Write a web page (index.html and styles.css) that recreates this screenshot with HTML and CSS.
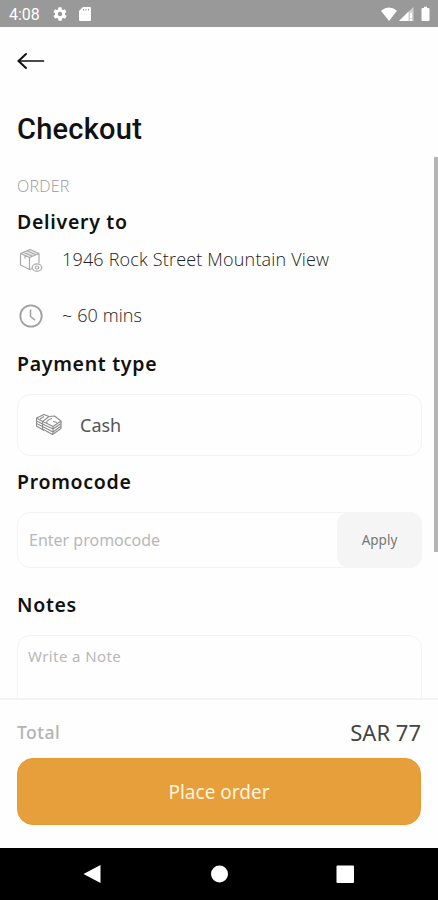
FILE: index.html
```html
<!DOCTYPE html>
<html lang="en">
<head>
<meta charset="utf-8">
<title>Checkout</title>
<link rel="stylesheet" href="styles.css">
</head>
<body>
<div class="phone">
  <header class="status">
    <span class="time">4:08</span>
    <svg class="gear" width="16" height="16" viewBox="0 0 24 24"><path fill="#fff" fill-rule="evenodd" d="M19.400 13a7.500 7.500 0 0 0 0-2l2.100-1.600a.5.5 0 0 0 .1-.6l-2-3.500a.5.5 0 0 0-.6-.2l-2.500 1a7 7 0 0 0-1.700-1l-.4-2.700a.5.5 0 0 0-.5-.4h-4a.5.5 0 0 0-.5.4l-.4 2.700a7 7 0 0 0-1.700 1l-2.500-1a.5.5 0 0 0-.6.2l-2 3.500a.5.5 0 0 0 .1.6L4.600 11a7.500 7.500 0 0 0 0 2l-2.100 1.600a.5.5 0 0 0-.1.6l2 3.500c.1.2.4.3.6.2l2.500-1a7 7 0 0 0 1.700 1l.4 2.700c0 .2.2.4.5.4h4c.2 0 .5-.2.5-.4l.4-2.700a7 7 0 0 0 1.700-1l2.500 1c.2.1.5 0 .6-.2l2-3.500a.5.5 0 0 0-.1-.6zM12 15.300a3.300 3.300 0 1 1 0-6.600 3.300 3.300 0 0 1 0 6.600z"/></svg>
    <svg class="card-icon" width="12" height="14" viewBox="0 0 12 14"><path fill="#fff" fill-rule="evenodd" d="M4 0h7q1 0 1 1v12q0 1-1 1H1q-1 0-1-1V4zM4 2v1.500h1V2zM6.500 2v1.500h1V2zM9 2v1.500h1V2z"/></svg>
    <svg class="signals" width="50" height="16" viewBox="0 0 50 16"><path fill="#fff" d="M0 4.200Q8-2 16 4.200L8 14.500zM40.500 2.500q0-1 1-1h1.500V.3h3v1.200h1.500q1 0 1 1v11q0 1-1 1h-6q-1 0-1-1z" transform="translate(0 .5)"/><path fill="#fff" fill-opacity=".55" d="M18 15 32.500 1v14z"/><path fill="#fff" d="M18 15 27.500 5.500V15zM29 7h2v5h-2zM29 13h2v2h-2z"/></svg>
  </header>
  <main class="content">
    <svg class="back" width="28" height="18" viewBox="0 0 28 18" fill="none" stroke="#111" stroke-linecap="round"><path stroke-width="1.700" d="M2 9h24.500"/><path stroke-width="2" d="M9 2 1.500 9 9 16"/></svg>
    <h1>Checkout</h1>
    <p class="eyebrow">ORDER</p>
    <h2 class="delivery-title"><span>Delivery to</span></h2>
    <div class="info address">
      <svg width="26" height="26" viewBox="0 0 26 26" fill="none" stroke="#aaa" stroke-width="1.200" stroke-linejoin="round"><path d="M3.500 6.500 13 2.500l9 4v9.500M3.500 6.500v11.500l9 4.500 3-1M3.500 6.500l9 4 9.500-4M12.500 10.500v12M6.500 5.200l9 4M9.800 3.800l9 4M8 8.500v3"/><path fill="#aaa" fill-opacity=".25" stroke="none" d="m3.500 6.500 9.500-4 9 4-9.500 4z"/><ellipse cx="20" cy="20.500" rx="4.800" ry="3.700"/><ellipse cx="20" cy="20.500" rx="1.800" ry="1.500"/></svg>
      <span class="addr-text">1946 Rock Street Mountain View</span>
    </div>
    <div class="info eta">
      <svg width="26" height="26" viewBox="0 0 26 26" fill="none" stroke="#a0a0a0"><circle cx="14" cy="13" r="10.700" stroke-width="1.800"/><path stroke-width="1.500" d="M13.500 6.500v7l4.500 3.700"/></svg>
      <span class="eta-text">~ 60 mins</span>
    </div>
    <h2 class="payment-title"><span>Payment type</span></h2>
    <div class="box payment">
      <svg width="28" height="24" viewBox="0 0 28 24" fill="none" stroke="#8c8c8c" stroke-width="1.100" stroke-linejoin="round"><path d="M1.500 5 9 1.500l5 2 5.500-.5L26 8l-8 5.500L11 10 7.500 8.500zM1.500 5v8L9 17.500M1.500 8l7 3.500M1.500 10.500l7 3.500M14 3.500 7.500 8.500V16l10 5.500 8.500-6V8M18 13.500v8M7.500 11l10.500 5 8-5.500M7.500 13.500 18 19l8-6M17 5.500c-3 .5-5 2-5.500 4.500M9 3.500 5 6M18 8.500l4 1"/></svg>
      <span class="cash">Cash</span>
    </div>
    <h2 class="promo-title"><span>Promocode</span></h2>
    <div class="box promo">
      <span class="promo-hint">Enter promocode</span>
      <div class="apply"><span>Apply</span></div>
    </div>
    <h2 class="notes-title"><span>Notes</span></h2>
    <div class="box notes"><span class="note-hint">Write a Note</span></div>
    <div class="scrollbar"></div>
  </main>
  <section class="footer">
    <div class="total"><span class="total-label">Total</span><span class="amount">SAR 77</span></div>
    <div class="order"><span>Place order</span></div>
  </section>
  <nav class="navbar">
    <svg width="438" height="52" viewBox="0 0 438 52" fill="#fff"><path d="M83.500 26 100.500 17v18z"/><circle cx="219.500" cy="26" r="8.500"/><rect x="336.500" y="17.500" width="17.500" height="17.500" rx="1"/></svg>
  </nav>
</div>
</body>
</html>
```
FILE: styles.css
```css
* { box-sizing: border-box; }
body { margin: 0; background: #fefefe; font-family: "Noto Sans", sans-serif; }
h1, h2, p { margin: 0; }
svg { display: block; flex: none; }
span { white-space: nowrap; }
.phone { display: flex; flex-direction: column; width: 438px; height: 900px; overflow: hidden; }
.status { display: flex; align-items: center; height: 27px; padding: 1px 7px 0 9px; background: #999; }
.time { width: 43px; font: 400 16px/27px Roboto, sans-serif; color: #fff; }
.card-icon { margin-left: 11px; }
.signals { margin-left: auto; }
.content { position: relative; display: flex; flex-direction: column; height: 671px; padding: 0 16px 0 17px; overflow: hidden; }
.back { margin-top: 25px; }
h1 { height: 40px; margin-top: 39px; font: 500 29px/40px Roboto, sans-serif; color: #111; letter-spacing: .25px; }
.eyebrow { height: 24px; margin-top: 25px; font: 300 16px/24px "Open Sans", sans-serif; color: #999; letter-spacing: .2px; }
h2 { height: 28px; font-size: 19.500px; line-height: 28px; font-weight: 600; color: #111; letter-spacing: .7px; }
.delivery-title { margin-top: 10px; }
.info { display: flex; align-items: center; gap: 19px; height: 26px; font: 300 18px/26px "Open Sans", sans-serif; color: #222; }
.address { margin-top: 11px; }
.address span { margin-top: -3px; letter-spacing: .18px; }
.eta { margin-top: 30px; }
.eta span { margin-top: -3px; letter-spacing: .1px; }
.payment-title { margin-top: 21px; }
.box { border: 1px solid #f3f3f3; border-radius: 13px; flex: none; }
.payment { display: flex; align-items: center; gap: 17px; height: 62px; margin-top: 16px; padding-left: 17px; font-size: 18px; color: #555; }
.promo-title { margin-top: 12px; }
.promo { display: flex; align-items: center; justify-content: space-between; height: 56px; margin-top: 16px; padding-left: 11px; font-size: 16px; color: #b8b8b8; }
.promo span { margin-top: -1px; }
.apply { display: flex; align-items: center; justify-content: center; width: 85px; height: 56px; margin-right: -1px; border-radius: 12px; background: #f5f5f5; font-size: 13.500px; color: #777; }
.notes-title { margin-top: 23px; }
.notes { height: 90px; margin-top: 16px; padding: 8px 10px; font-size: 15px; line-height: 24px; color: #b8b8b8; letter-spacing: .4px; }
.scrollbar { position: absolute; right: 0; top: 130px; width: 4px; height: 395px; background: #b5b5b5; }
.footer { height: 150px; padding: 19px 17px 0; border-top: 2px solid #f3f3f3; }
.total { display: flex; align-items: center; justify-content: space-between; height: 26px; }
.total-label { font-size: 17.500px; font-weight: 500; color: #b3b3b3; letter-spacing: .5px; }
.amount { font-size: 22px; color: #444; }
.order { display: flex; align-items: center; justify-content: center; height: 67px; margin-top: 13px; border: 1px solid #e49a2c; border-radius: 16px; background: #e79f3c; font-size: 19px; color: #fff4df; }
.navbar { height: 52px; background: #000; }
```
